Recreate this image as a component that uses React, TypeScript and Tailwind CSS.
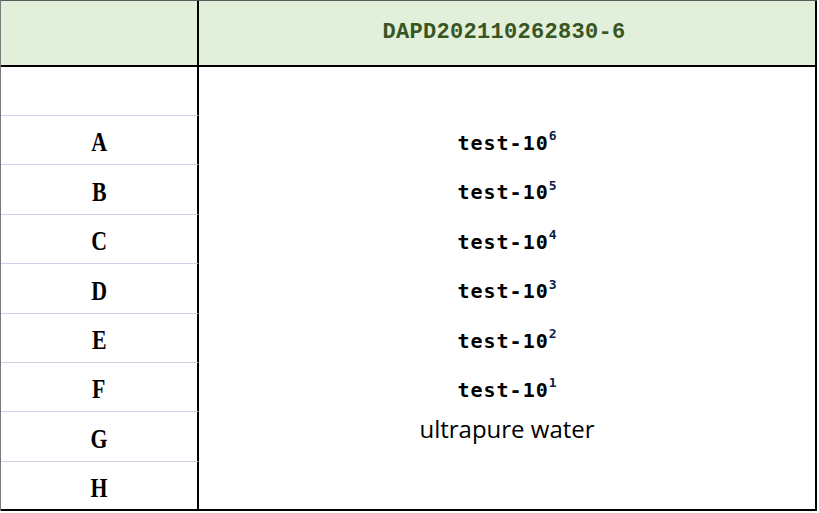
const rows = [
  { label: "", value: "", exp: "", h: "h-[49px]" },
  { label: "A", value: "test-10", exp: "6", h: "h-[49px]" },
  { label: "B", value: "test-10", exp: "5", h: "h-[50px]" },
  { label: "C", value: "test-10", exp: "4", h: "h-[49px]" },
  { label: "D", value: "test-10", exp: "3", h: "h-[50px]" },
  { label: "E", value: "test-10", exp: "2", h: "h-[49px]" },
  { label: "F", value: "test-10", exp: "1", h: "h-[49px]" },
  { label: "G", value: "ultrapure water", exp: "", h: "h-[50px]" },
  { label: "H", value: "", exp: "", h: "h-[47px]" },
];

export default function App() {
  return (
    <div className="w-[819px] h-[513px] bg-white">
      <div className="w-[817px] flex flex-col border-l border-l-[#7a7a7a]">
        {/* header */}
        <div className="flex h-[67px] bg-[#e2efda] border-t border-t-[#5a5a5a] border-b-2 border-b-black">
          <div className="w-[198px] border-r-2 border-r-black" />
          <div className="flex-1 flex items-center justify-center border-r-2 border-r-black pb-[1px] pr-[6px]">
            <span className="font-['Liberation_Mono',monospace] font-bold text-[22px] text-[#375623] tracking-[0.3px]">
              DAPD202110262830-6
            </span>
          </div>
        </div>

        {/* body */}
        <div className="flex flex-col border-b-2 border-b-black">
          {rows.map((r, i) => (
            <div key={i} className={`flex ${r.h} overflow-hidden`}>
              <div
                className={`w-[198px] flex items-center justify-center border-r-2 border-r-black pt-[4px] ${
                  i < rows.length - 1 ? "border-b border-b-[#cdd2e4]" : ""
                }`}
              >
                <span className="font-['Liberation_Serif',serif] font-bold text-[28px] leading-none text-black scale-x-[0.78]">
                  {r.label}
                </span>
              </div>
              <div className="flex-1 flex items-center justify-center border-r-2 border-r-black">
                {r.label === "G" ? (
                  <span className="font-['Open_Sans',sans-serif] text-[24px] leading-none text-black mb-[16px]">
                    {r.value}
                  </span>
                ) : r.value ? (
                  <span className="font-['DejaVu_Sans_Mono',monospace] font-bold text-[20px] leading-none text-black tracking-[1px] pt-[4px]">
                    {r.value}
                    <sup className="font-bold text-[13px] text-[#0b2147] tracking-normal top-[-0.7em]">
                      {r.exp}
                    </sup>
                  </span>
                ) : null}
              </div>
            </div>
          ))}
        </div>
      </div>
    </div>
  );
}
